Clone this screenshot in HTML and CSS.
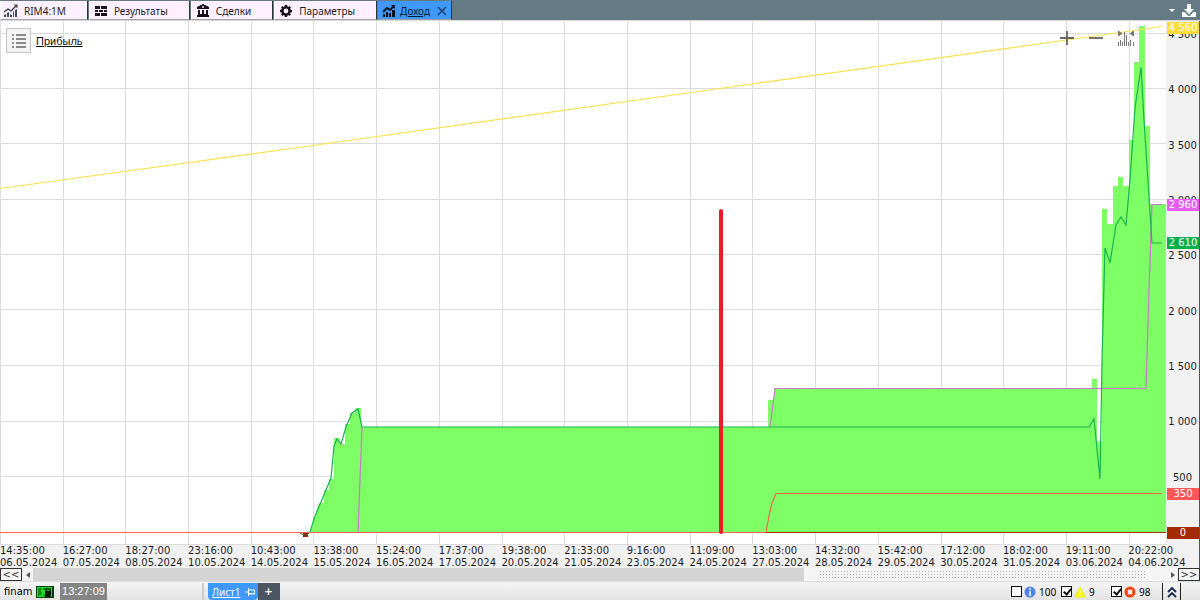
FILE: index.html
```html
<!DOCTYPE html>
<html lang="ru">
<head>
<meta charset="utf-8">
<title>Доход</title>
<link rel="stylesheet" href="styles.css">
</head>
<body>
<div class="app">
  <header class="topbar">
    <nav class="tabs">
      <button class="tab"><svg class="icon" viewBox="0 0 14 14"><path d="M0 8 4 5 7 7 13 1" fill="none" stroke="#333" stroke-width="1.3"/><path d="M10 1h3v3" fill="none" stroke="#333"/><path d="M0 13V11l2-1v3zM3 13V9l2-1v5zM6 13V10l2 1v2zM9 13V8l1-1v6zM11 13V6l2-1v8z" fill="#3b4c60"/></svg>RIM4:1M</button>
      <button class="tab"><svg class="icon" viewBox="0 0 14 14"><path d="M1 2h5v3H1zM7 2h6v3H7zM1 6h3v2H1zM5 6h4v2H5zM10 6h3v2h-3zM1 9h5v3H1zM7 9h6v3H7z" fill="#181020"/></svg>Результаты</button>
      <button class="tab"><svg class="icon" viewBox="0 0 14 14"><path d="M7 0 13 3v2H1V3zM2 6h2v4H2zM6 6h2v4H6zM10 6h2v4h-2zM2 10h10v1h1v2H1v-2h1z" fill="#181018"/><circle cx="7" cy="3" r="1" fill="#fff0ff"/></svg>Сделки</button>
      <button class="tab"><svg class="icon" viewBox="0 0 14 14"><circle cx="7" cy="7" r="3.6" fill="none" stroke="#181018" stroke-width="2.4"/><path d="M7 1v2M7 11v2M1 7h2M11 7h2M2.8 2.8 4 4M10 10l1.2 1.2M2.8 11.2 4 10M10 4l1.2-1.2" stroke="#181018" stroke-width="2.4"/></svg>Параметры</button>
      <button class="tab tab-active"><svg class="icon" viewBox="0 0 14 14"><path d="M1 8 5 4 8 6 12 2" fill="none" stroke="#06121f" stroke-width="1.8"/><path d="M9 1h4v4z" fill="#06121f"/><path d="M1 10h2v3H1zM4 8h2v5H4zM7 9h2v4H7zM10 6h3v7h-3z" fill="#06121f"/></svg><span class="tab-name">Доход</span><svg class="close" viewBox="0 0 10 10"><path d="M1 1l8 8M9 1 1 9" stroke="#173a68" stroke-width="1.4"/></svg></button>
    </nav>
    <div class="top-actions">
      <button class="plain" aria-label="Список"><svg width="6" height="4" viewBox="0 0 6 4"><path d="M0 0h6L3 3z" fill="#fff"/></svg></button>
      <button class="plain" aria-label="Сохранить"><svg width="16" height="16" viewBox="0 0 16 16"><path d="M6 1h4v5h3L8 11 3 6h3z" fill="#fff"/><path d="M1 9h3l4 3 4-3h3v5H1z" fill="#fff"/><path d="M4 9l4 4 4-4" fill="none" stroke="#647b86"/></svg></button>
    </div>
  </header>

  <main class="chart">
    <div class="plot">
      <svg class="canvas" viewBox="0 21 1166 524" preserveAspectRatio="none">
        <path d="M0 33.5H1166M0 88.5H1166M0 143.5H1166M0 199.5H1166M0 254.5H1166M0 309.5H1166M0 365.5H1166M0 421.5H1166M0 476.5H1166M0 544.5H1166M.5 21V545M63.5 21V545M125.5 21V545M188.5 21V545M251.5 21V545M313.5 21V545M376.5 21V545M439.5 21V545M502.5 21V545M564.5 21V545M627.5 21V545M690.5 21V545M752.5 21V545M815.5 21V545M878.5 21V545M941.5 21V545M1003.5 21V545M1066.5 21V545M1129.5 21V545" stroke="#dcdcdc" fill="none"/>
        <path d="M310 532 313 525V517H316V512L319 503H324V490H329V479H334V438H340V444H345V424H350V413H355V408H361V427H768V400H774V388H1092V379H1097V441H1102V209H1107V224H1113V186H1118V177H1123V186H1129V140H1134V62H1139V26H1145V126H1150V204H1166V532Z" fill="#7fff66"/>
        <rect x="303" y="533" width="5" height="4" fill="#b01515"/>
        <path d="M300 533 304 535H307L310 532" stroke="#176b2c" fill="none"/>
        <path d="M358 532 360 480 362 427M770 427 775 388.5H1146L1149 290 1152 204.500H1162" class="line" stroke="#d071d4"/>
        <path d="M310 532 315 516 321 502 326 490 331 478 334 446 337 439 341 444 346 427 352 413 358 409 362 427H1089L1094 419 1100 479 1102 360 1105 248 1110 263 1116 225 1121 217 1126 225 1130 180 1135 108 1141 67 1144 120 1152 243H1162" class="line" stroke="#14b450"/>
        <path d="M0 532.5H766L769 516 772 503 776 493.5H1162" class="line" stroke="#f76551"/>
        <path d="M766 532.5H1166" class="line" stroke="#a53508"/>
        <path d="M0 188.500 313 145.500 720 88.500 1067 40 1162 26.500" class="line" stroke="#ffe04b"/>
        <path d="M721 211V532" stroke="#ee1c25" stroke-width="4" stroke-linecap="round"/>
      </svg>
      <div class="legend">
        <button class="list-button" aria-label="Список графиков"><svg width="16" height="16" viewBox="0 0 16 16"><path d="M1 2h2M1 6h2M1 10h2M1 14h2M5 2h10M5 6h10M5 10h10M5 14h10" stroke="#666" stroke-width="1.4"/></svg></button>
        <a class="legend-link" href="#">Прибыль</a>
      </div>
      <div class="zoom-tools">
        <button class="plain" aria-label="Увеличить"><svg width="14" height="16" viewBox="0 0 14 16"><path d="M0 8h14M7 1v14" stroke="#666" stroke-width="1.800"/></svg></button>
        <button class="plain" aria-label="Уменьшить"><svg width="14" height="16" viewBox="0 0 14 16"><path d="M0 8h14" stroke="#666" stroke-width="1.800"/></svg></button>
        <button class="plain" aria-label="Автомасштаб"><svg width="16" height="16" viewBox="0 0 16 16"><path d="M.5 1v5M15.500 1v5M.5 12v4M2.500 10v6M4.500 12v4M6.500 2v14M8.500 5v11M10.500 12v4M12.500 10v6M15.500 12v4" stroke="#777"/><path d="M1 1 4.500 3.500 1 6zM15 1 11.500 3.500 15 6z" fill="#777"/></svg></button>
      </div>
    </div>
    <div class="y-axis">
      <span>4 500</span><span>4 000</span><span>3 500</span><span>3 000</span><span>2 500</span><span>2 000</span><span>1 500</span><span>1 000</span><span>500</span>
      <b class="mark mark-top">4 560</b>
      <b class="mark mark-pink">2 960</b>
      <b class="mark mark-green">2 610</b>
      <b class="mark mark-red">350</b>
      <b class="mark mark-zero">0</b>
    </div>
  </main>

  <div class="x-axis">
    <span>14:35:00<br>06.05.2024</span><span>16:27:00<br>07.05.2024</span><span>18:27:00<br>08.05.2024</span><span>23:16:00<br>10.05.2024</span><span>10:43:00<br>14.05.2024</span><span>13:38:00<br>15.05.2024</span><span>15:24:00<br>16.05.2024</span><span>17:37:00<br>17.05.2024</span><span>19:38:00<br>20.05.2024</span><span>21:33:00<br>21.05.2024</span><span>9:16:00<br>23.05.2024</span><span>11:09:00<br>24.05.2024</span><span>13:03:00<br>27.05.2024</span><span>14:32:00<br>28.05.2024</span><span>15:42:00<br>29.05.2024</span><span>17:12:00<br>30.05.2024</span><span>18:02:00<br>31.05.2024</span><span>19:11:00<br>03.06.2024</span><span>20:22:00<br>04.06.2024</span>
  </div>

  <div class="scroll">
    <button class="jump">&lt;&lt;</button>
    <button class="step" aria-label="Влево"><svg width="4" height="6" viewBox="0 0 4 6"><path d="M4 0v6L0 3z" fill="#555"/></svg></button>
    <div class="track"><div class="thumb"></div><div class="rest"></div></div>
    <button class="step" aria-label="Вправо"><svg width="4" height="6" viewBox="0 0 4 6"><path d="M0 0v6l4-3z" fill="#555"/></svg></button>
    <button class="jump">&gt;&gt;</button>
  </div>

  <footer class="status">
    <span class="account">finam</span>
    <svg class="link-icon" width="18" height="14" viewBox="0 0 18 14"><path d="M0 1h18v12H0z" fill="#063b0b"/><path d="M1 2h15v10H1z" fill="#20e02c"/><path d="M2 4h4M2 6h3M2 8h4M2 10h3M7 4h2M7 10h2" stroke="#063b0b"/><path d="M9 6h6v6H9z" fill="#041c06"/><path d="M10 7V4h4v3" fill="none" stroke="#041c06" stroke-width="1.500"/></svg>
    <time class="clock">13:27:09</time>
    <div class="sheets">
      <button class="sheet"><span class="tab-name">Лист1</span><svg width="10" height="8" viewBox="0 0 10 8"><path d="M0 4h3M3.500 0v8M4 2h5.500v4H4M4 5.500h5" stroke="#fff" fill="none"/></svg></button>
      <button class="add">+</button>
    </div>
    <div class="filters">
      <label class="filter"><input type="checkbox"><svg width="12" height="12" viewBox="0 0 12 12"><circle cx="6" cy="6" r="5.500" fill="#4f83ee"/><path d="M6 2v2M6 5v4M5 9h2" stroke="#fff" stroke-width="1.400"/></svg><span class="count">100</span></label>
      <label class="filter"><input type="checkbox" checked><svg width="12" height="12" viewBox="0 0 12 12"><path d="M6 1 11 11H1z" fill="#ff0" stroke="#f2ea00"/><path d="M6 4v3M6 8v2" stroke="#fffde0" stroke-width="1.200"/></svg><span class="count">9</span></label>
      <label class="filter"><input type="checkbox" checked><svg width="12" height="12" viewBox="0 0 12 12"><circle cx="6" cy="6" r="5.500" fill="#f4430c"/><path d="M4 4l4 4M8 4 4 8" stroke="#fff" stroke-width="2"/></svg><span class="count">98</span></label>
    </div>
    <button class="expand" aria-label="Развернуть"><svg width="10" height="12" viewBox="0 0 10 12"><path d="M1 6l4-4 4 4M1 11l4-4 4 4" fill="none" stroke="#13294b" stroke-width="1.800"/></svg></button>
  </footer>
</div>
</body>
</html>
```
FILE: styles.css
```css
* { box-sizing: border-box; }
body { margin: 0; font: 10px/12px "DejaVu Sans", sans-serif; color: #1c1c1c; }
button { margin: 0; padding: 0; border: 0; font: inherit; color: inherit; background: none; }
svg { display: block; flex: none; }
.app { display: flex; flex-direction: column; height: 100vh; background: #f1f1f1; overflow: hidden; }
.topbar { display: flex; flex: none; justify-content: space-between; height: 21px; padding-top: 1px; background: #647b86; border-bottom: 1px solid #d8d8d8; }
.tabs { display: flex; gap: 1px; height: 19px; font: 10px/14px "Noto Sans", sans-serif; }
.tab { display: flex; align-items: center; gap: 6px; padding: 1px 21px 0 4px; background: #fff0ff; border-left: 1px solid #fff; border-right: 1px solid #2a353b; border-bottom: 1px solid #a5a0a8; white-space: nowrap; }
.tab:first-child { padding-left: 3px; }
.tab-active { background: #4098fb; border-left-color: #4098fb; padding-left: 3px; padding-right: 4px; gap: 4px; color: #05192f; }
.tab-name { text-decoration: underline; }
.icon { width: 14px; height: 14px; }
.close { width: 10px; height: 10px; margin-left: 3px; }
.top-actions { display: flex; align-items: center; gap: 6px; padding-right: 3px; }

.chart { display: flex; flex: 1; min-height: 0; border-right: 1px solid #4a5761; }
.plot { position: relative; flex: 1; min-width: 0; background: #fff; }
.canvas { position: absolute; inset: 0; width: 100%; height: 100%; }
.line { fill: none; stroke-width: 1.2; }
.legend { position: absolute; left: 6px; top: 7px; display: flex; align-items: center; gap: 5px; }
.list-button { display: grid; place-items: center; width: 25px; height: 25px; background: #f4f4f4; border: 1px solid #c4c4c4; }
.legend-link { color: #111; font: 11px/14px "Liberation Sans", sans-serif; }
.zoom-tools { position: absolute; right: 32px; top: 9px; display: flex; gap: 15px; }

.y-axis { position: relative; display: flex; flex-direction: column; width: 33px; padding: 6px 0 20px; }
.y-axis span { flex: 1; text-align: center; line-height: 16px; }
.mark { position: absolute; left: 1px; width: 32px; height: 12px; line-height: 12px; text-align: center; font-weight: 400; color: #fff; }
.mark-top { top: 0.2%; background: #ffdc3c; }
.mark-pink { top: 34%; background: #e95ff5; }
.mark-green { top: 41.3%; background: #08b04c; }
.mark-red { top: 89.2%; background: #ff5757; }
.mark-zero { top: 96.6%; background: #a52a00; }

.x-axis { display: grid; flex: none; grid-template-columns: repeat(19, 1fr); height: 23px; padding-right: 8px; border-right: 1px solid #4a5761; white-space: nowrap; }

.scroll { display: flex; flex: none; height: 14px; margin-bottom: 1px; background: #f5f5f5; border-bottom: 1px solid #ddd; }
.jump { width: 22px; height: 13px; border: 1px solid #333; line-height: 11px; color: #333; }
.step { display: grid; place-items: center; width: 11px; }
.track { display: flex; flex: 1; }
.thumb { width: 68%; background: #d4d4d4; }
.rest { flex: 1; margin: 3px 20px 3px 16px; background: conic-gradient(from 270deg at 1px 1px, #aaa 25%, transparent 0) 0 0 / 3px 3px; }

.status { display: flex; flex: none; align-items: center; height: 17px; padding-left: 4px; background: linear-gradient(#f4f4f4, #e2e2e2); }
.account { width: 32px; color: #000; }
.clock { margin-left: 6px; width: 47px; text-align: center; background: #858585; color: #fff; font: 11px/17px "Liberation Sans", sans-serif; }
.sheets { display: flex; align-self: stretch; margin-left: 95px; padding-left: 4px; border-left: 2px solid #ccc; }
.sheet { display: flex; align-items: center; gap: 4px; padding: 0 3px 0 4px; color: #fff; background: #4098fb; border-radius: 0 0 4px 4px; font: 10px/14px "Noto Sans", sans-serif; }
.add { width: 22px; background: #4a5761; color: #fff; font-weight: 700; }
.filters { display: flex; gap: 5px; margin-left: auto; }
.filter { display: flex; align-items: center; gap: 2px; }
.filter input { appearance: none; width: 11px; height: 11px; margin: 0; border: 1px solid #111; background: #fff; }
.filter input:checked::after { content: ""; display: block; width: 3px; height: 6px; margin: 0 0 0 3px; border: solid #111; border-width: 0 2px 2px 0; transform: rotate(40deg); }
.count { width: 18px; padding-left: 1px; font: 10px/14px "Noto Sans", sans-serif; color: #000; }
.expand { display: grid; place-items: center; align-self: stretch; width: 19px; margin: 0 19px 0 6px; border: solid #222; border-width: 0 1px; }
```
